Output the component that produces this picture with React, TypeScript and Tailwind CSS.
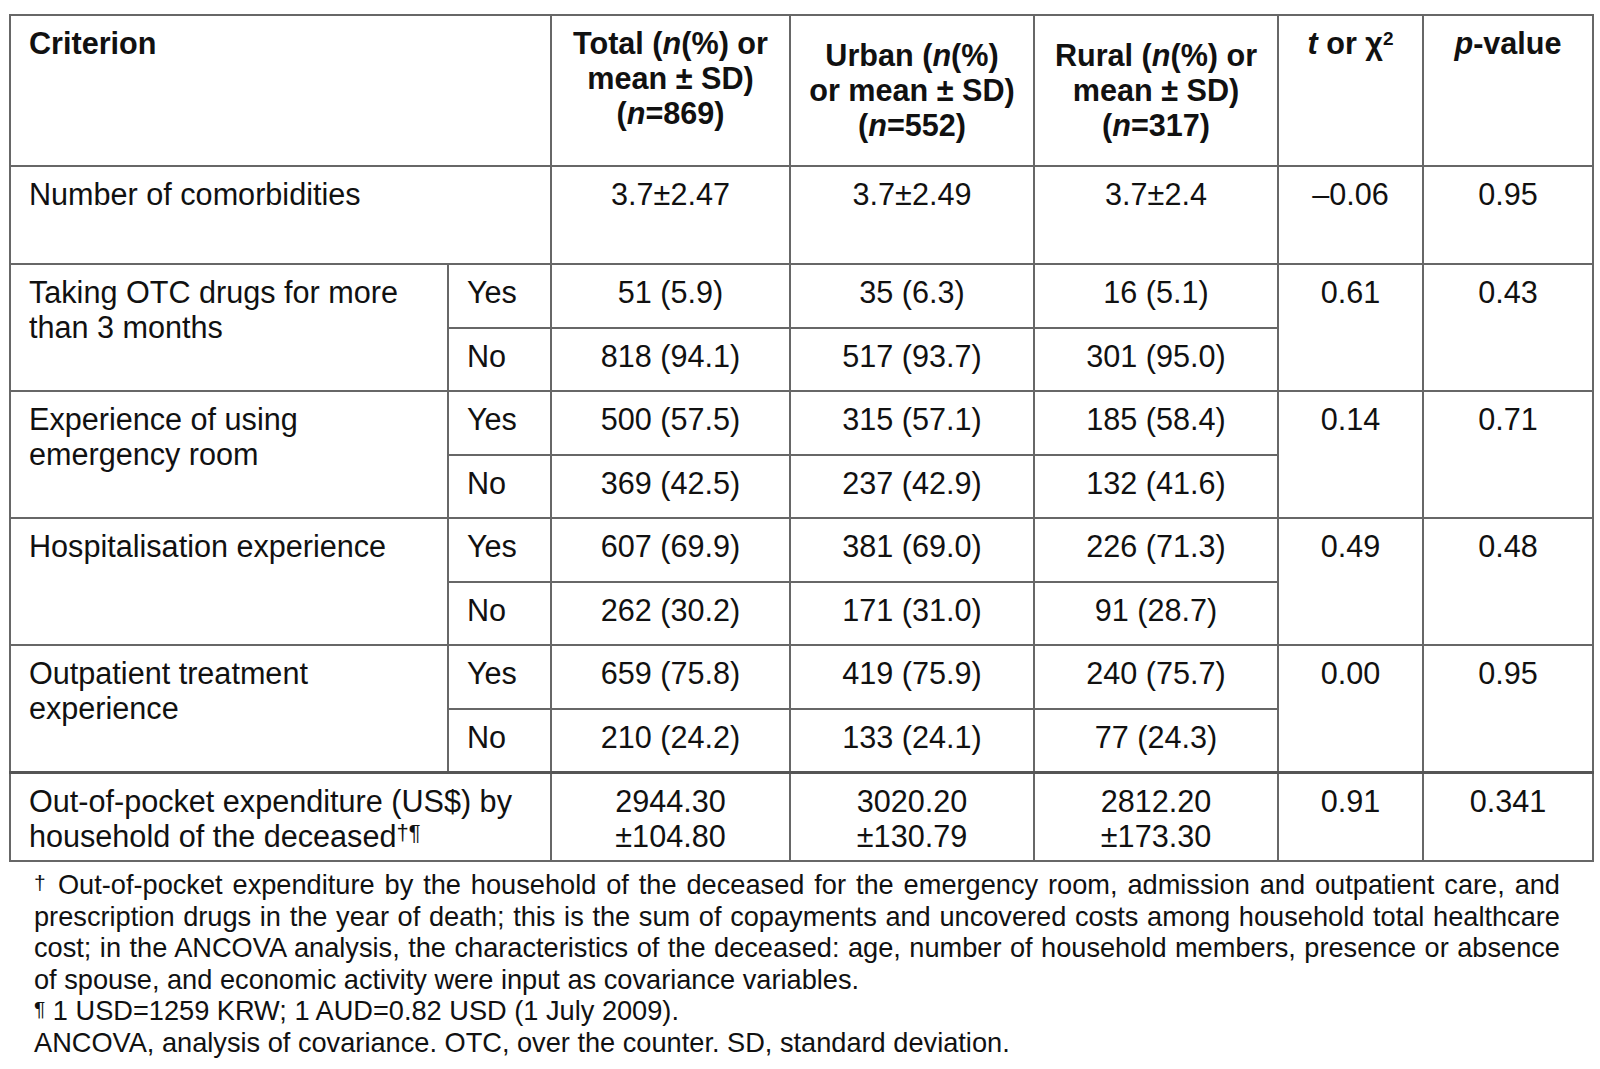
import React from 'react';

type Group = {
  label: React.ReactNode;
  yes: string[];
  no: string[];
  t: string;
  p: string;
};

const groups: Group[] = [
  {
    label: <>Taking OTC drugs for more<br />than 3 months</>,
    yes: ['51 (5.9)', '35 (6.3)', '16 (5.1)'],
    no: ['818 (94.1)', '517 (93.7)', '301 (95.0)'],
    t: '0.61',
    p: '0.43',
  },
  {
    label: <>Experience of using<br />emergency room</>,
    yes: ['500 (57.5)', '315 (57.1)', '185 (58.4)'],
    no: ['369 (42.5)', '237 (42.9)', '132 (41.6)'],
    t: '0.14',
    p: '0.71',
  },
  {
    label: <>Hospitalisation experience</>,
    yes: ['607 (69.9)', '381 (69.0)', '226 (71.3)'],
    no: ['262 (30.2)', '171 (31.0)', '91 (28.7)'],
    t: '0.49',
    p: '0.48',
  },
  {
    label: <>Outpatient treatment<br />experience</>,
    yes: ['659 (75.8)', '419 (75.9)', '240 (75.7)'],
    no: ['210 (24.2)', '133 (24.1)', '77 (24.3)'],
    t: '0.00',
    p: '0.95',
  },
];

const cell = 'border-2 border-[#676767] align-top pt-[10px] leading-[35px]';
const num = `${cell} text-center`;
const lbl = `${cell} text-left pl-[18px] pr-2`;

export default function App() {
  return (
    <div className="w-[1600px] h-[1069px] bg-white text-[#111] font-['Liberation_Sans',Arial,sans-serif] pt-[14px] pl-[9px]">
      <table className="table-fixed border-collapse w-[1583px] text-[30.6px]">
        <colgroup>
          <col className="w-[438px]" />
          <col className="w-[103px]" />
          <col className="w-[239px]" />
          <col className="w-[244px]" />
          <col className="w-[244px]" />
          <col className="w-[145px]" />
          <col className="w-[170px]" />
        </colgroup>
        <thead>
          <tr className="h-[151px] font-bold">
            <th colSpan={2} className={lbl}>Criterion</th>
            <th className={num}>Total (<i>n</i>(%) or<br />mean ± SD)<br />(<i>n</i>=869)</th>
            <th className={`${num} pt-[22px]`}>Urban (<i>n</i>(%)<br />or mean ± SD)<br />(<i>n</i>=552)</th>
            <th className={`${num} pt-[22px]`}>Rural (<i>n</i>(%) or<br />mean ± SD)<br />(<i>n</i>=317)</th>
            <th className={num}><i>t</i> or χ<sup className="text-[19px] relative -top-[9px]">2</sup></th>
            <th className={num}><i>p</i>-value</th>
          </tr>
        </thead>
        <tbody>
          <tr className="h-[98px]">
            <td colSpan={2} className={lbl}>Number of comorbidities</td>
            <td className={num}>3.7±2.47</td>
            <td className={num}>3.7±2.49</td>
            <td className={num}>3.7±2.4</td>
            <td className={num}>–0.06</td>
            <td className={num}>0.95</td>
          </tr>
          {groups.map((g, i) => (
            <React.Fragment key={i}>
              <tr className="h-[64px]">
                <td rowSpan={2} className={lbl}>{g.label}</td>
                <td className={lbl}>Yes</td>
                {g.yes.map((v, j) => (
                  <td key={j} className={num}>{v}</td>
                ))}
                <td rowSpan={2} className={num}>{g.t}</td>
                <td rowSpan={2} className={num}>{g.p}</td>
              </tr>
              <tr className="h-[63px]">
                <td className={lbl}>No</td>
                {g.no.map((v, j) => (
                  <td key={j} className={num}>{v}</td>
                ))}
              </tr>
            </React.Fragment>
          ))}
          <tr className="h-[89px] border-t-[3px] border-t-[#555]">
            <td colSpan={2} className={lbl}>
              Out-of-pocket expenditure (US$) by<br />household of the deceased
              <sup className="text-[22px] relative -top-[7px]">†¶</sup>
            </td>
            <td className={num}>2944.30<br />±104.80</td>
            <td className={num}>3020.20<br />±130.79</td>
            <td className={num}>2812.20<br />±173.30</td>
            <td className={num}>0.91</td>
            <td className={num}>0.341</td>
          </tr>
        </tbody>
      </table>

      <div className="mt-[7px] ml-[25px] w-[1526px] text-[27.2px] leading-[31.6px]">
        <div className="text-justify [text-align-last:justify]">
          <sup className="text-[21px] relative -top-[4px]">†</sup> Out-of-pocket expenditure by the household of the deceased for the emergency room, admission and outpatient care, and
        </div>
        <div className="text-justify [text-align-last:justify]">
          prescription drugs in the year of death; this is the sum of copayments and uncovered costs among household total healthcare
        </div>
        <div className="text-justify [text-align-last:justify]">
          cost; in the ANCOVA analysis, the characteristics of the deceased: age, number of household members, presence or absence
        </div>
        <div>of spouse, and economic activity were input as covariance variables.</div>
        <div>
          <sup className="text-[21px] relative -top-[4px]">¶</sup> 1 USD=1259 KRW; 1 AUD=0.82 USD (1 July 2009).
        </div>
        <div>ANCOVA, analysis of covariance. OTC, over the counter. SD, standard deviation.</div>
      </div>
    </div>
  );
}
